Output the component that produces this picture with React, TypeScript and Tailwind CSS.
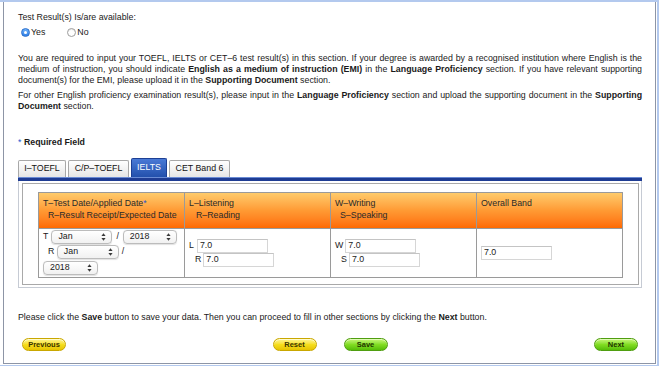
import React from "react";

function Arrows() {
  return (
    <svg width="5" height="8" viewBox="0 0 5 8">
      <path d="M2.5 0.3 L4.6 3.1 L0.4 3.1 Z M2.5 7.7 L4.6 4.9 L0.4 4.9 Z" fill="#3a3a3a" />
    </svg>
  );
}

function Sel({ className, text }: { className: string; text: string }) {
  return (
    <div
      className={
        "flex h-[14px] items-center justify-between rounded-[4px] border border-[#bcbcbc] bg-linear-to-b from-white to-[#f1f1f1] pl-[6px] pr-[5px] shadow-[0_0.5px_1px_rgba(0,0,0,0.12)] " +
        className
      }
    >
      <span>{text}</span>
      <Arrows />
    </div>
  );
}

function Field({ className }: { className: string }) {
  return (
    <div
      className={
        "flex h-[14px] w-[71px] items-center border border-[#d6d6d6] border-t-[#c4c4c4] bg-white pl-[2px] " +
        className
      }
    >
      7.0
    </div>
  );
}

function YellowBtn({ children }: { children: React.ReactNode }) {
  return (
    <div className="flex h-[13px] w-[44px] items-center justify-center rounded-full border border-[#c9a700] bg-linear-to-b from-[#fff68a] via-[#f6de1c] to-[#e6c300] text-[7.5px] font-bold text-[#3a3300] shadow-[inset_0_1px_0_rgba(255,255,255,0.6)]">
      {children}
    </div>
  );
}

function GreenBtn({ children }: { children: React.ReactNode }) {
  return (
    <div className="flex h-[13px] w-[44px] items-center justify-center rounded-full border border-[#4f9e10] bg-linear-to-b from-[#c8f874] via-[#82dd22] to-[#55bd06] text-[7.5px] font-bold text-[#1f3300] shadow-[inset_0_1px_0_rgba(255,255,255,0.5)]">
      {children}
    </div>
  );
}

function Tab({ className, children, active }: { className: string; children: React.ReactNode; active?: boolean }) {
  if (active) {
    return (
      <div
        className={
          "flex h-[19px] items-center justify-center rounded-t-[2px] border border-b-0 border-[#1d3f94] bg-linear-to-b from-[#4a7ad6] to-[#2350ac] text-white " +
          className
        }
      >
        {children}
      </div>
    );
  }
  return (
    <div
      className={
        "flex h-[17px] items-center justify-center rounded-t-[2px] border border-b-0 border-[#a8a8a8] bg-linear-to-b from-white to-[#e6e6e6] text-[#111] " +
        className
      }
    >
      {children}
    </div>
  );
}

export default function App() {
  return (
    <div className="h-[370px] w-[659px] overflow-hidden bg-white font-['Liberation_Sans',Arial,Helvetica,sans-serif] text-[8.8px] text-[#1a1a1a]">
      <div className="h-[366px] w-[659px] border-t-2 border-r-2 border-b border-[#b3c9ee]">
        <div className="ml-[3px] flex h-[362px] w-[653px] flex-col border-r border-b border-l border-[#8d95a6] pt-[10px] pr-[13px] pl-[14px]">
          <div className="leading-[11px]">Test Result(s) Is/are available:</div>
          <div className="mt-[3px] flex h-[12px] items-center leading-[11px]">
            <div className="ml-[3px] flex h-[9px] w-[9px] items-center justify-center rounded-full border border-[#2b6fce] bg-linear-to-b from-[#6db1f8] to-[#2f7fe6]">
              <div className="h-[3px] w-[3px] rounded-full bg-white" />
            </div>
            <span className="ml-[1px]">Yes</span>
            <div className="ml-[22px] h-[9px] w-[9px] rounded-full border border-[#9d9d9d] bg-white shadow-[inset_0_1px_1px_rgba(0,0,0,0.1)]" />
            <span className="ml-[1px]">No</span>
          </div>
          <p className="mt-[15px] text-justify leading-[11px]">
            You are required to input your TOEFL, IELTS or CET–6 test result(s) in this section. If your degree is
            awarded by a recognised institution where English is the medium of instruction, you should indicate{" "}
            <b>English as a medium of instruction (EMI)</b> in the <b>Language Proficiency</b> section. If you have
            relevant supporting document(s) for the EMI, please upload it in the <b>Supporting Document</b> section.
          </p>
          <p className="mt-[4px] text-justify leading-[11px]">
            For other English proficiency examination result(s), please input in the <b>Language Proficiency</b>{" "}
            section and upload the supporting document in the <b>Supporting Document</b> section.
          </p>
          <div className="mt-[24.5px] leading-[11px]">
            <span className="text-[#2456d0]">*</span> <b>Required Field</b>
          </div>
          <div className="mt-[10.5px] flex h-[19px] items-end gap-[2px]">
            <Tab className="w-[48px]">I–TOEFL</Tab>
            <Tab className="w-[61px]">C/P–TOEFL</Tab>
            <Tab className="w-[36px]" active>
              IELTS
            </Tab>
            <Tab className="w-[61px]">CET Band 6</Tab>
          </div>
          <div className="h-[4px] border-t border-[#6a8bd4] bg-[#1f3c93]" />
          <div className="border-r border-b border-l border-[#c6cbd4] pt-[2px] pr-[2px] pb-[2px] pl-[3px]">
            <div className="border border-[#a9a9a9] pt-[8px] pr-[14px] pb-[6px] pl-[15px]">
              <div className="w-[585px] border border-[#9a9a9a]">
                <div className="grid h-[36px] grid-cols-[145px_146px_146px_146px] border-b border-[#9a9a9a] bg-linear-to-b from-[#ffcb6a] via-[#ff9a33] to-[#ff6a00] leading-[11.5px] text-[#2a2a2a]">
                  <div className="pt-[5px] pl-[4px]">
                    <div>
                      T–Test Date/Applied Date<span className="text-[#2456d0]">*</span>
                    </div>
                    <div className="ml-[5px]">R–Result Receipt/Expected Date</div>
                  </div>
                  <div className="border-l border-[#9a9a9a] pt-[5px] pl-[4px]">
                    <div>L–Listening</div>
                    <div className="ml-[7px]">R–Reading</div>
                  </div>
                  <div className="border-l border-[#9a9a9a] pt-[5px] pl-[4px]">
                    <div>W–Writing</div>
                    <div className="ml-[5px]">S–Speaking</div>
                  </div>
                  <div className="border-l border-[#9a9a9a] pt-[5px] pl-[4px]">
                    <div>Overall Band</div>
                  </div>
                </div>
                <div className="grid h-[48px] grid-cols-[145px_146px_146px_146px] bg-white">
                  <div className="flex flex-col pt-[1px] pl-[4px]">
                    <div className="flex h-[14px] items-center">
                      <span>T</span>
                      <Sel className="ml-[3px] w-[61px]" text="Jan" />
                      <span className="mx-[4px]">/</span>
                      <Sel className="w-[54px]" text="2018" />
                    </div>
                    <div className="mt-[1px] flex h-[14px] items-center pl-[5px]">
                      <span>R</span>
                      <Sel className="ml-[2.5px] w-[62px]" text="Jan" />
                      <span className="ml-[3px]">/</span>
                    </div>
                    <div className="mt-[2px] flex h-[14px] items-center">
                      <Sel className="w-[55px]" text="2018" />
                    </div>
                  </div>
                  <div className="flex flex-col justify-center border-l border-[#9a9a9a] pl-[4px]">
                    <div className="flex items-center">
                      <span>L</span>
                      <Field className="ml-[3px]" />
                    </div>
                    <div className="flex items-center pl-[6px]">
                      <span>R</span>
                      <Field className="ml-[2px]" />
                    </div>
                  </div>
                  <div className="flex flex-col justify-center border-l border-[#9a9a9a] pl-[4px]">
                    <div className="flex items-center">
                      <span>W</span>
                      <Field className="ml-[2px]" />
                    </div>
                    <div className="flex items-center pl-[6px]">
                      <span>S</span>
                      <Field className="ml-[2px]" />
                    </div>
                  </div>
                  <div className="flex flex-col justify-center border-l border-[#9a9a9a] pl-[4px]">
                    <Field className="" />
                  </div>
                </div>
              </div>
            </div>
          </div>
          <div className="mt-[23.5px] leading-[11px]">
            Please click the <b>Save</b> button to save your data. Then you can proceed to fill in other sections by
            clicking the <b>Next</b> button.
          </div>
          <div className="mt-[15.5px] flex items-center justify-between px-[4px]">
            <YellowBtn>Previous</YellowBtn>
            <div className="flex items-center gap-[27px]">
              <YellowBtn>Reset</YellowBtn>
              <GreenBtn>Save</GreenBtn>
            </div>
            <GreenBtn>Next</GreenBtn>
          </div>
        </div>
      </div>
    </div>
  );
}
